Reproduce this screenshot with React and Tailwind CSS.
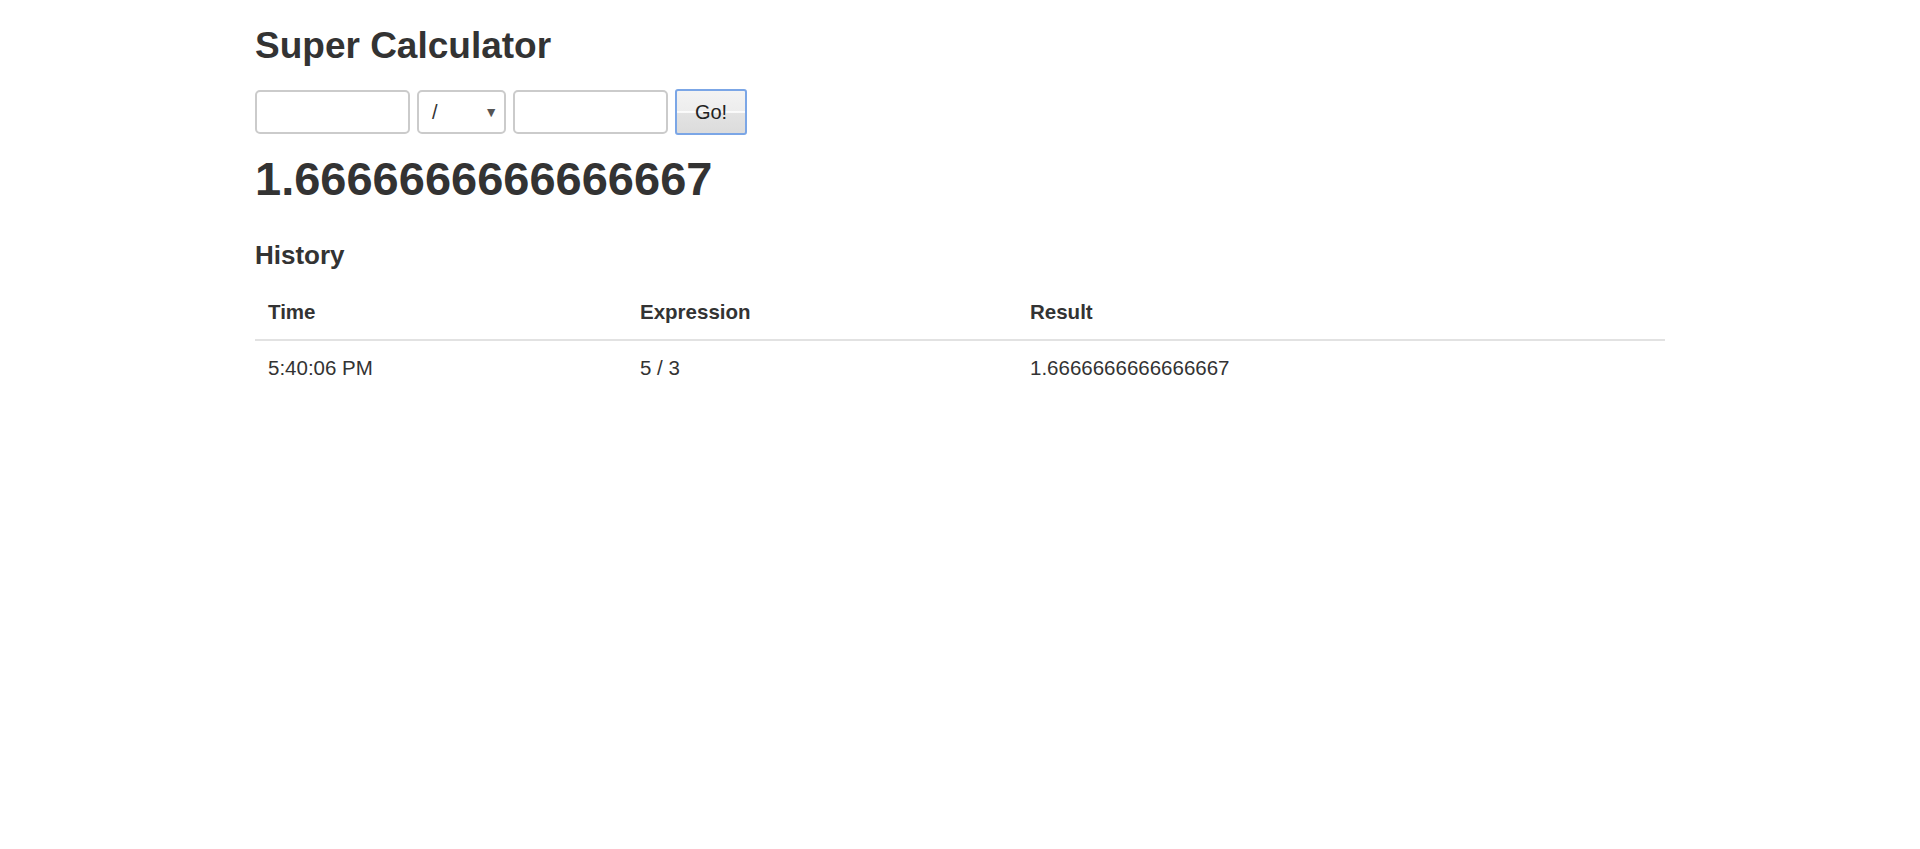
import React from 'react';

const history = [
  { time: '5:40:06 PM', expression: '5 / 3', result: '1.6666666666666667' }
];

export default function App() {
  return (
    <div className="min-h-screen bg-white text-[#333] font-['Liberation_Sans',Arial,sans-serif]">
      <div className="w-[1410px] mx-auto pt-[26px]">
        <h1 className="text-[37px] leading-[1.1] font-bold">Super Calculator</h1>

        <div className="mt-[22px] flex items-center gap-[7px]">
          <input
            type="text"
            className="w-[155px] h-[44px] border-2 border-[#cbcbcb] rounded-[5px] px-3 text-[20px] outline-none"
          />
          <div className="relative w-[89px] h-[44px] border-2 border-[#cbcbcb] rounded-[5px] flex items-center">
            <span className="pl-[13px] text-[20px] leading-none">/</span>
            <span className="absolute right-[6px] top-1/2 -translate-y-1/2 text-[14px] text-[#555] leading-none">▼</span>
          </div>
          <input
            type="text"
            className="w-[155px] h-[44px] border-2 border-[#cbcbcb] rounded-[5px] px-3 text-[20px] outline-none"
          />
          <button className="w-[72px] h-[46px] border-2 border-[#7ba6e6] rounded-[3px] text-[20px] text-[#222] bg-[linear-gradient(to_bottom,#f3f3f3_0%,#ededed_48%,#ffffff_49%,#ffffff_51%,#e3e3e3_52%,#dcdcdc_100%)]">
            Go!
          </button>
        </div>

        <div className="mt-[18px] text-[47px] leading-[1.1] font-bold">1.6666666666666667</div>

        <h3 className="mt-[37px] text-[26px] leading-[1.1] font-bold">History</h3>

        <table className="mt-[13px] w-full border-collapse text-[20.5px] leading-[1.43]">
          <thead>
            <tr className="border-b-2 border-[#e2e2e2]">
              <th className="w-[373px] text-left font-bold pl-[13px] pt-[14px] pb-[13px]">Time</th>
              <th className="w-[390px] text-left font-bold pl-[12px] pt-[14px] pb-[13px]">Expression</th>
              <th className="text-left font-bold pl-[12px] pt-[14px] pb-[13px]">Result</th>
            </tr>
          </thead>
          <tbody>
            {history.map((h, i) => (
              <tr key={i}>
                <td className="pl-[13px] pt-[12px] pb-[11px]">{h.time}</td>
                <td className="pl-[12px] pt-[12px] pb-[11px]">{h.expression}</td>
                <td className="pl-[12px] pt-[12px] pb-[11px]">{h.result}</td>
              </tr>
            ))}
          </tbody>
        </table>
      </div>
    </div>
  );
}
